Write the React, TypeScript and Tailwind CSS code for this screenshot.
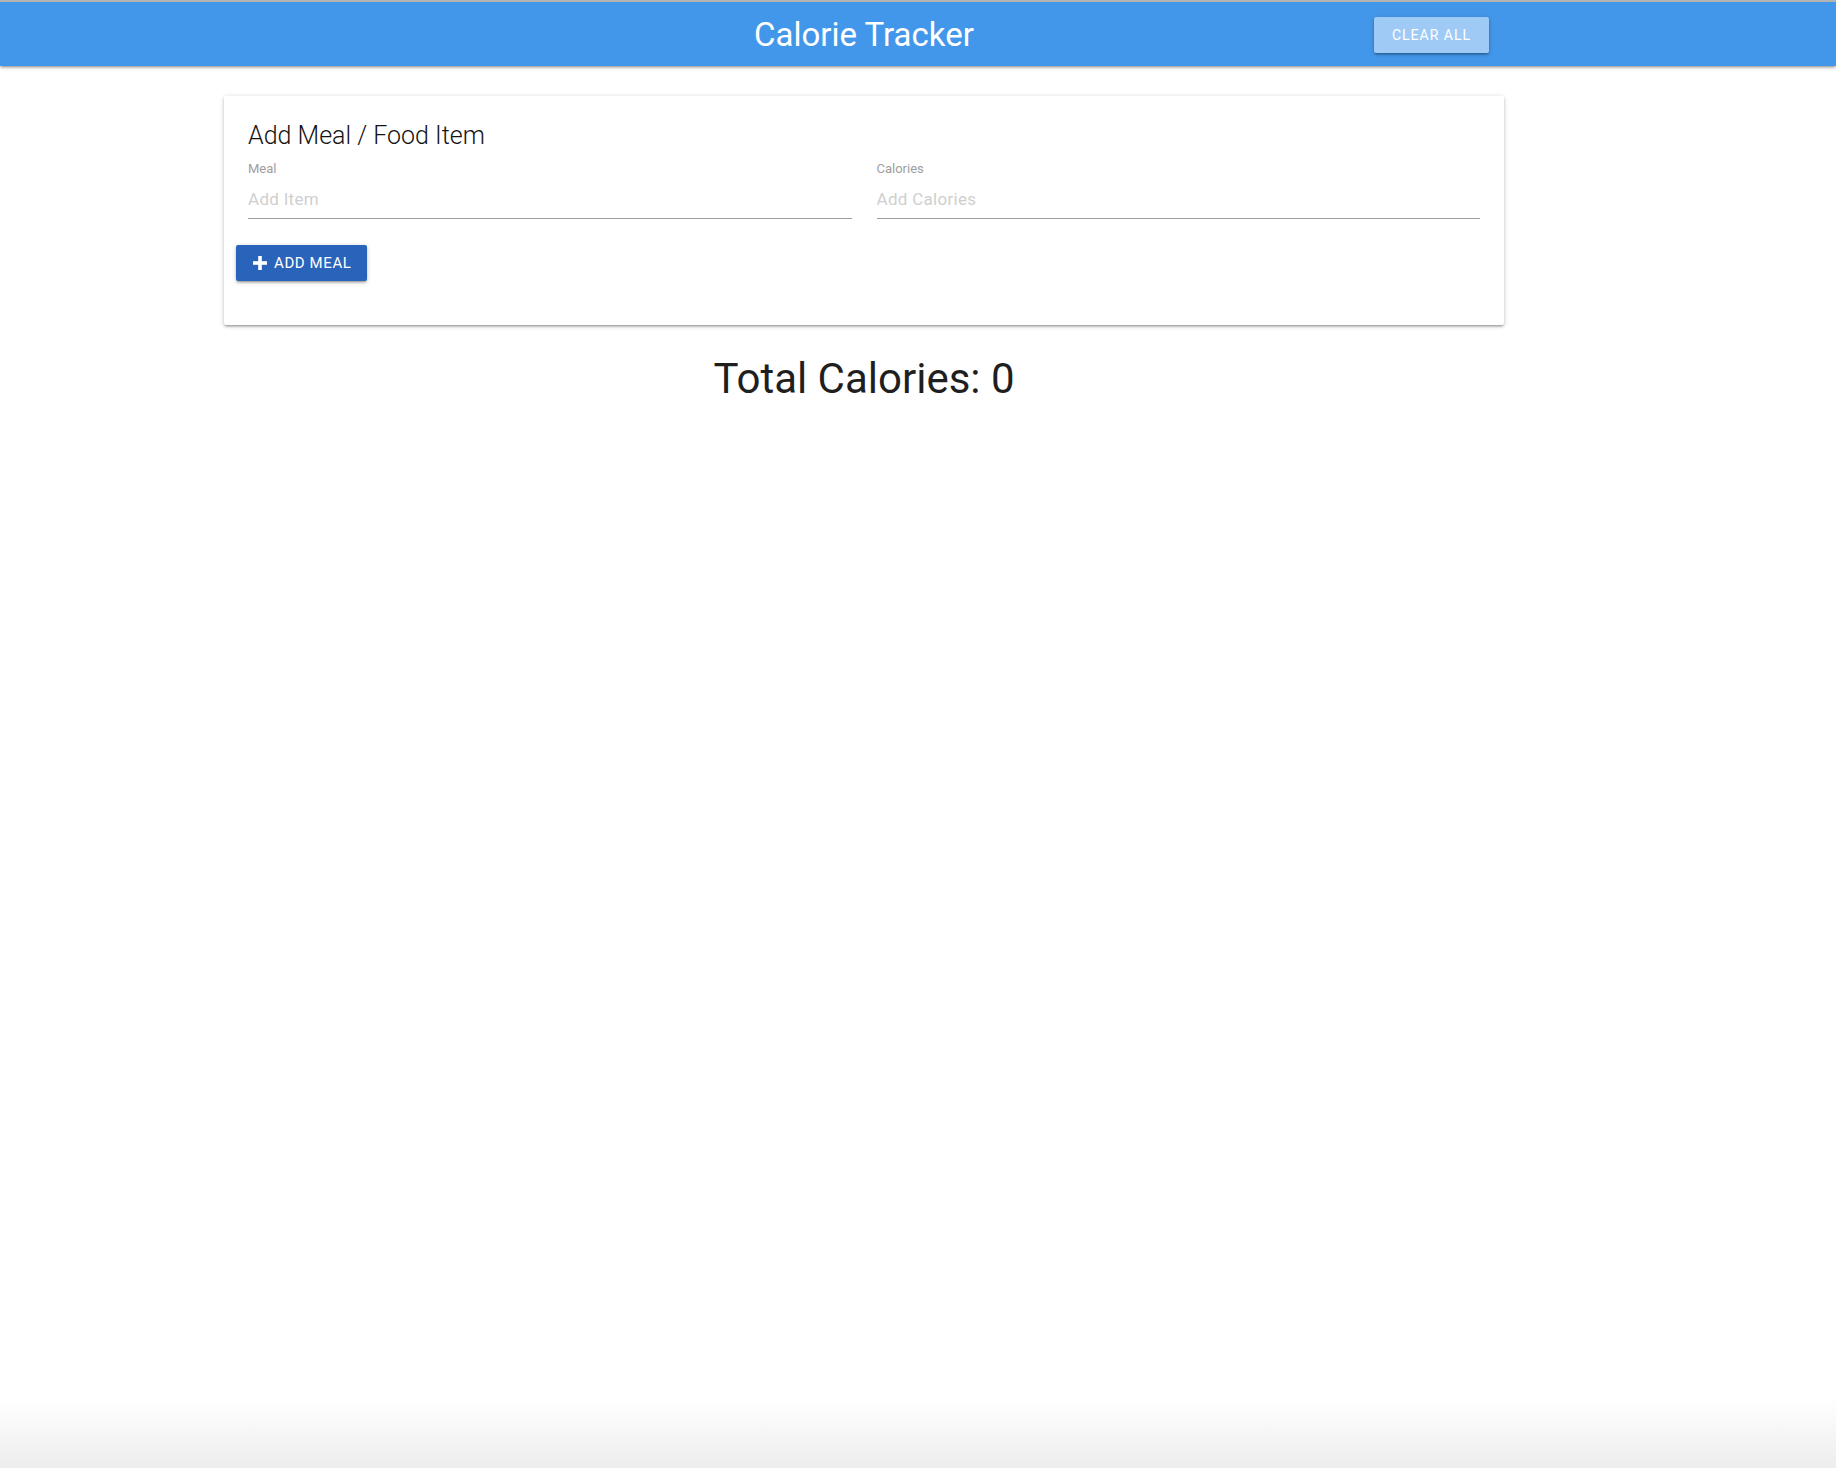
import React from "react";

export default function App() {
  return (
    <div className="min-h-[1468px] flex flex-col bg-white font-['Roboto','Helvetica_Neue',Arial,sans-serif]">
      <nav className="h-[66px] border-t-2 border-[#b3b3b3] bg-[#4397ea] shadow-[0_2px_2px_0_rgba(0,0,0,0.14),0_3px_1px_-2px_rgba(0,0,0,0.12),0_1px_5px_0_rgba(0,0,0,0.2)]">
        <div className="ml-[224px] w-[1280px] h-full grid grid-cols-[1fr_auto_1fr] items-center">
          <div />
          <span className="text-white text-[33px] leading-none">Calorie Tracker</span>
          <div className="flex justify-end pr-[15px] pt-[2px]">
            <button className="h-[36px] w-[115px] rounded-[2px] bg-[#9ecaf5] text-white text-[14px] tracking-[1px] uppercase shadow-[0_2px_2px_0_rgba(0,0,0,0.14),0_3px_1px_-2px_rgba(0,0,0,0.12),0_1px_5px_0_rgba(0,0,0,0.2)]">
              Clear All
            </button>
          </div>
        </div>
      </nav>

      <main className="ml-[224px] w-[1280px] mt-[30px]">
        <div className="bg-white rounded-[2px] shadow-[0_2px_2px_0_rgba(0,0,0,0.14),0_3px_1px_-2px_rgba(0,0,0,0.12),0_1px_5px_0_rgba(0,0,0,0.2)] px-[24px] pt-[24px] pb-[44px]">
          <h2 className="text-[25px] leading-[32px] font-light text-[#141414]">Add Meal / Food Item</h2>
          <div className="grid grid-cols-2 gap-[25px] mt-[10px]">
            <div>
              <label className="block text-[13px] leading-[14px] text-[#9e9e9e]">Meal</label>
              <input
                placeholder="Add Item"
                className="block w-full h-[43px] pt-[3px] border-b border-[#9e9e9e] outline-none text-[17px] tracking-[0.3px] text-[#333] placeholder:text-[#cfcfcf]"
              />
            </div>
            <div>
              <label className="block text-[13px] leading-[14px] text-[#9e9e9e]">Calories</label>
              <input
                placeholder="Add Calories"
                className="block w-full h-[43px] pt-[3px] border-b border-[#9e9e9e] outline-none text-[17px] tracking-[0.3px] text-[#333] placeholder:text-[#cfcfcf]"
              />
            </div>
          </div>
          <button className="mt-[26px] -ml-[12px] h-[36px] pl-[17px] pr-[16px] flex items-center gap-[7px] rounded-[2px] bg-[#2a64ba] text-white text-[15px] tracking-[0.6px] uppercase shadow-[0_2px_2px_0_rgba(0,0,0,0.14),0_3px_1px_-2px_rgba(0,0,0,0.12),0_1px_5px_0_rgba(0,0,0,0.2)]">
            <svg width="14" height="14" viewBox="0 0 14 14" fill="white">
              <rect x="5.2" y="0" width="3.6" height="14" />
              <rect x="0" y="5.2" width="14" height="3.6" />
            </svg>
            Add Meal
          </button>
        </div>

        <h3 className="mt-[30px] text-center text-[42px] leading-[48px] text-[#1f1f1f]">Total Calories: 0</h3>
      </main>

      <div className="flex-1" />
      <div className="h-[68px] bg-gradient-to-b from-white to-[#ededed]" />
    </div>
  );
}
